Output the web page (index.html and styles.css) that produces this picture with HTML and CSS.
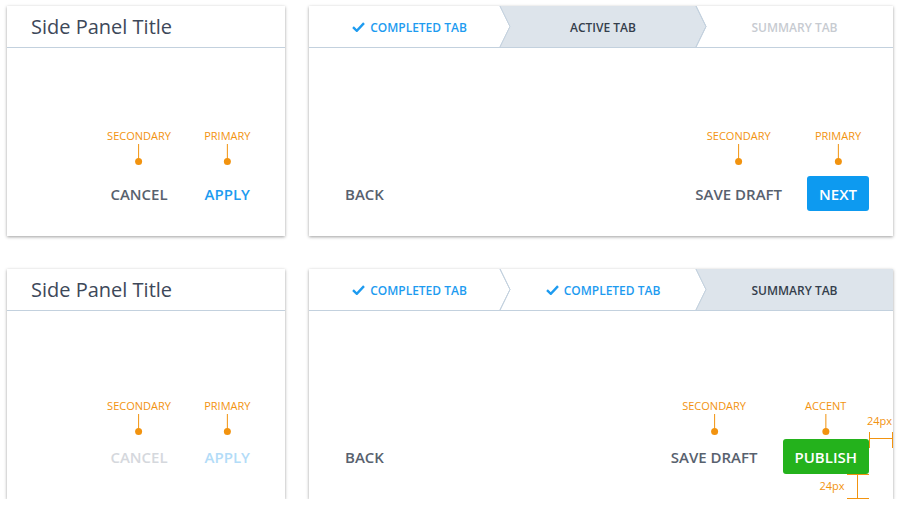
FILE: index.html
```html
<!DOCTYPE html>
<html lang="en">
<head>
<meta charset="utf-8">
<title>Panel buttons</title>
<link rel="stylesheet" href="styles.css">
</head>
<body>
<div class="board">

  <section class="panel">
    <header class="panel-head"><h1 class="title">Side Panel Title</h1></header>
    <div class="panel-foot side-foot">
      <div class="btn-wrap">
        <div class="anno"><span class="anno-label">SECONDARY</span><span class="anno-line"></span><span class="anno-dot"></span></div>
        <button class="btn">CANCEL</button>
      </div>
      <div class="btn-wrap">
        <div class="anno"><span class="anno-label">PRIMARY</span><span class="anno-line"></span><span class="anno-dot"></span></div>
        <button class="btn btn-link">APPLY</button>
      </div>
    </div>
  </section>

  <section class="panel">
    <nav class="tabs">
      <div class="tab tab-1">
        <svg class="tab-bg" viewBox="0 0 201 41"><polyline class="chev" points="191,0 201,20.5 191,41"/></svg>
        <span class="tab-label done"><svg class="check" viewBox="0 0 13 10"><path d="M1 5.2 L4.8 8.8 L12 1.2"/></svg>COMPLETED TAB</span>
      </div>
      <div class="tab tab-2">
        <svg class="tab-bg" viewBox="0 0 206 41"><path class="fill" d="M0,0 H196 L206,20.5 L196,41 H0 L10,20.5 Z"/><polyline class="chev" points="0,0 10,20.5 0,41"/><polyline class="chev" points="196,0 206,20.5 196,41"/></svg>
        <span class="tab-label">ACTIVE TAB</span>
      </div>
      <div class="tab tab-3">
        <svg class="tab-bg" viewBox="0 0 197 41"><polyline class="chev" points="0,0 10,20.5 0,41"/></svg>
        <span class="tab-label disabled">SUMMARY TAB</span>
      </div>
    </nav>
    <div class="panel-foot wizard-foot">
      <button class="btn btn-back">BACK</button>
      <div class="btn-wrap">
        <div class="anno"><span class="anno-label">SECONDARY</span><span class="anno-line"></span><span class="anno-dot"></span></div>
        <button class="btn">SAVE DRAFT</button>
      </div>
      <div class="btn-wrap">
        <div class="anno"><span class="anno-label">PRIMARY</span><span class="anno-line"></span><span class="anno-dot"></span></div>
        <button class="btn btn-primary">NEXT</button>
      </div>
    </div>
  </section>

  <section class="panel">
    <header class="panel-head"><h1 class="title">Side Panel Title</h1></header>
    <div class="panel-foot side-foot">
      <div class="btn-wrap">
        <div class="anno anno-tight"><span class="anno-label">SECONDARY</span><span class="anno-line"></span><span class="anno-dot"></span></div>
        <button class="btn btn-disabled">CANCEL</button>
      </div>
      <div class="btn-wrap">
        <div class="anno anno-tight"><span class="anno-label">PRIMARY</span><span class="anno-line"></span><span class="anno-dot"></span></div>
        <button class="btn btn-link-disabled">APPLY</button>
      </div>
    </div>
  </section>

  <section class="panel">
    <nav class="tabs">
      <div class="tab tab-1">
        <svg class="tab-bg" viewBox="0 0 201 41"><polyline class="chev" points="191,0 201,20.5 191,41"/></svg>
        <span class="tab-label done"><svg class="check" viewBox="0 0 13 10"><path d="M1 5.2 L4.8 8.8 L12 1.2"/></svg>COMPLETED TAB</span>
      </div>
      <div class="tab tab-2">
        <svg class="tab-bg" viewBox="0 0 206 41"><polyline class="chev" points="0,0 10,20.5 0,41"/><polyline class="chev" points="196,0 206,20.5 196,41"/></svg>
        <span class="tab-label done"><svg class="check" viewBox="0 0 13 10"><path d="M1 5.2 L4.8 8.8 L12 1.2"/></svg>COMPLETED TAB</span>
      </div>
      <div class="tab tab-3">
        <svg class="tab-bg" viewBox="0 0 197 41"><path class="fill" d="M0,0 H197 V41 H0 L10,20.5 Z"/><polyline class="chev" points="0,0 10,20.5 0,41"/></svg>
        <span class="tab-label">SUMMARY TAB</span>
      </div>
    </nav>
    <div class="panel-foot wizard-foot">
      <button class="btn btn-back">BACK</button>
      <div class="btn-wrap">
        <div class="anno anno-tight"><span class="anno-label">SECONDARY</span><span class="anno-line"></span><span class="anno-dot"></span></div>
        <button class="btn">SAVE DRAFT</button>
      </div>
      <div class="btn-wrap">
        <div class="anno anno-tight"><span class="anno-label">ACCENT</span><span class="anno-line"></span><span class="anno-dot"></span></div>
        <button class="btn btn-accent">PUBLISH</button>
        <div class="measure measure-h"><span class="measure-label">24px</span></div>
        <div class="measure measure-v"><span class="measure-label">24px</span></div>
      </div>
    </div>
  </section>

</div>
</body>
</html>
```

FILE: styles.css
```css
* { box-sizing: border-box; }

html, body {
  margin: 0;
  background: #ffffff;
}

body {
  font-family: "Open Sans", "Noto Sans", sans-serif;
}

.board {
  display: grid;
  grid-template-columns: 278px 584px;
  grid-template-rows: 230px 230px;
  column-gap: 24px;
  row-gap: 33px;
  padding: 6px 0 0 7px;
}

.panel {
  background: #ffffff;
  box-shadow: 0 1px 3px rgba(0, 0, 0, 0.38);
  display: flex;
  flex-direction: column;
}

.panel-head {
  height: 42px;
  border-bottom: 1px solid #c3d1de;
  padding-left: 24px;
}

.title {
  margin: 0;
  font-size: 20px;
  font-weight: 400;
  line-height: 41px;
  color: #3d4859;
}

.panel-foot {
  flex: 1;
  display: flex;
  align-items: flex-end;
  justify-content: flex-end;
  gap: 13px;
  padding: 0 24px 25px 24px;
}

.side-foot {
  padding-right: 23px;
}

.btn-back {
  margin-right: auto;
}

.btn-wrap {
  position: relative;
}

.btn {
  font-family: inherit;
  font-size: 15px;
  font-weight: 600;
  height: 35px;
  padding: 0 12px;
  border: 0;
  border-radius: 3px;
  background: transparent;
  color: #58616e;
  display: flex;
  align-items: center;
  cursor: pointer;
}

.btn-link { color: #1d9bf0; }
.btn-disabled { color: #d5d8dd; }
.btn-link-disabled { color: #b3dcf8; }

.btn-primary {
  background: #0d9af0;
  color: #ffffff;
}

.btn-accent {
  background: #24b21c;
  color: #ffffff;
}

/* annotations */
.anno {
  position: absolute;
  left: 50%;
  bottom: 100%;
  transform: translateX(-50%);
  margin-bottom: 11px;
  display: flex;
  flex-direction: column;
  align-items: center;
}

.anno-tight { margin-bottom: 4px; }

.anno-label {
  font-size: 11px;
  line-height: 12px;
  color: #f2930f;
  white-space: nowrap;
}

.anno-line {
  width: 1px;
  height: 15px;
  margin-top: 2px;
  background: #f2930f;
}

.anno-dot {
  width: 7px;
  height: 7px;
  margin-top: -1px;
  border-radius: 50%;
  background: #f2930f;
}

.measure {
  position: absolute;
  border-color: #f2930f;
  border-style: solid;
  border-width: 0;
}

.measure::before {
  content: "";
  position: absolute;
  background: #f2930f;
}

.measure-h {
  left: 100%;
  top: -7px;
  width: 24px;
  height: 16px;
  border-left-width: 1px;
  border-right-width: 1px;
}

.measure-h::before {
  left: 0;
  right: 0;
  top: 6px;
  height: 1px;
}

.measure-h .measure-label {
  position: absolute;
  right: 0;
  bottom: calc(100% + 5px);
}

.measure-v {
  left: 64px;
  top: 100%;
  width: 22px;
  height: 25px;
  border-top-width: 1px;
  border-bottom-width: 1px;
}

.measure-v::before {
  left: 10px;
  width: 1px;
  top: 0;
  bottom: 0;
}

.measure-v .measure-label {
  position: absolute;
  right: calc(100% + 2px);
  top: 5px;
}

.measure-label {
  font-size: 11px;
  line-height: 12px;
  color: #f2930f;
  white-space: nowrap;
}

/* tabs */
.tabs {
  height: 42px;
  display: flex;
  border-bottom: 1px solid #c3d1de;
}

.tab {
  position: relative;
  height: 41px;
  display: flex;
  align-items: center;
  justify-content: center;
  flex: none;
}

.tab-1 { width: 201px; }
.tab-2 { width: 206px; margin-left: -10px; }
.tab-3 { width: 197px; margin-left: -10px; }

.tab-bg {
  position: absolute;
  left: 0;
  top: 0;
  width: 100%;
  height: 100%;
  overflow: visible;
}

.tab-bg .fill { fill: #dde4eb; }

.tab-bg .chev {
  fill: none;
  stroke: #c3d1de;
  stroke-width: 1;
}

.tab-label {
  position: relative;
  display: flex;
  align-items: center;
  gap: 5px;
  padding-top: 1px;
  font-size: 12px;
  font-weight: 600;
  color: #343e4b;
  white-space: nowrap;
}

.tab-label.done { color: #1d9bf0; }
.tab-label.disabled { color: #c7cbd1; }

.check {
  width: 13px;
  height: 10px;
  fill: none;
  stroke: currentColor;
  stroke-width: 2.4;
}
```
